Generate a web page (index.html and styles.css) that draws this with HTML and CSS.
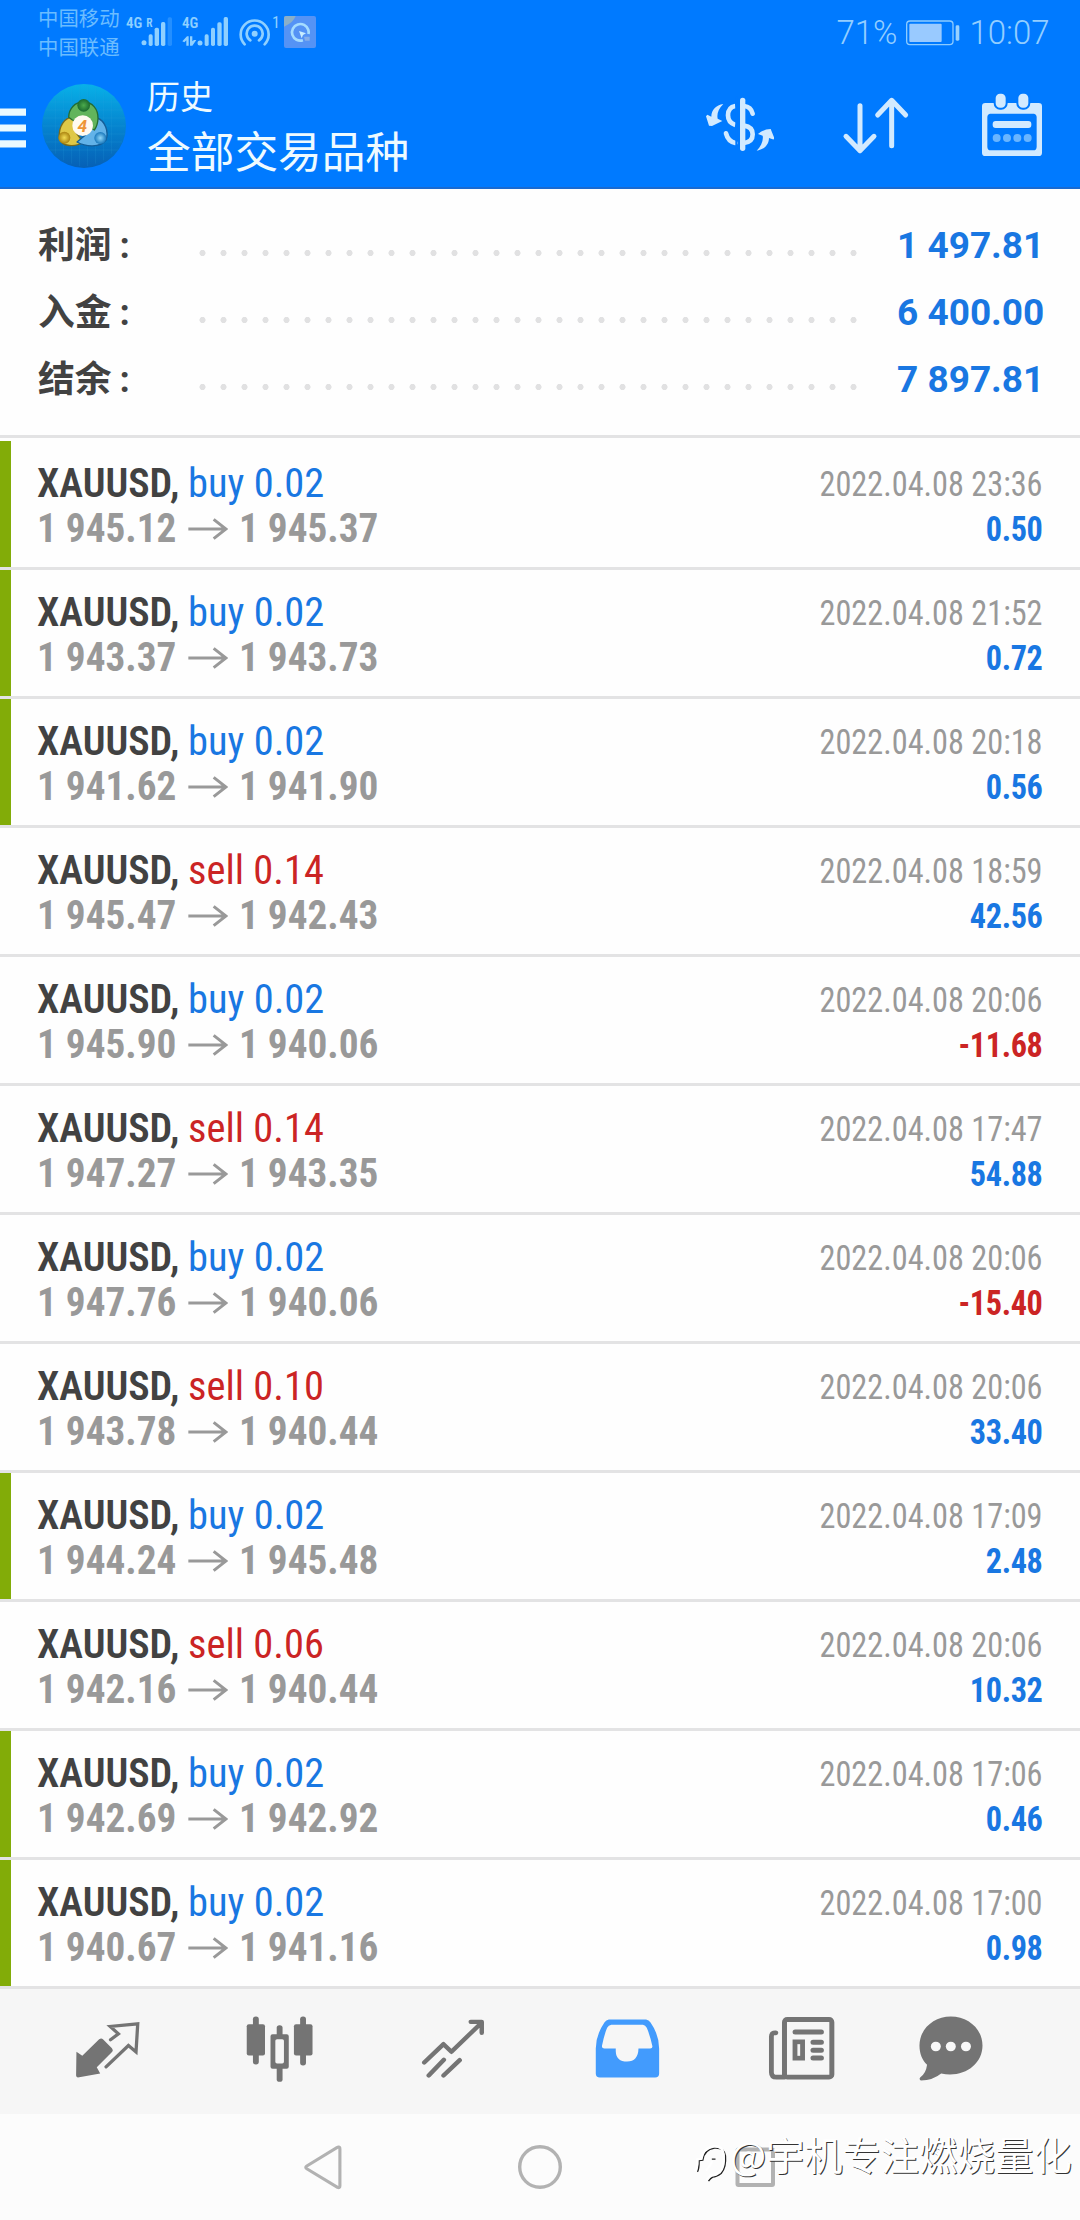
FILE: index.html
```html
<!DOCTYPE html>
<html lang="zh-CN">
<head>
<meta charset="utf-8">
<title>历史</title>
<link rel="stylesheet" href="styles.css">
</head>
<body>
<svg class="defs" width="0" height="0">
  <symbol id="arrow" viewBox="0 0 120 66"><path d="M1 33H112M77 4L114 33L77 62" fill="none" stroke="currentColor" stroke-width="9"/></symbol>
</svg>
<header class="top">
  <div class="status">
    <div class="carriers"><span>中国移动</span><span>中国联通</span></div>
    <svg class="signals" viewBox="0 0 600 135">
      <g fill="#8fd0ff">
        <text x="18" y="54" font-size="46" font-weight="600" textLength="49" lengthAdjust="spacingAndGlyphs">4G</text>
        <text x="79" y="51" font-size="39" font-weight="600" textLength="19" lengthAdjust="spacingAndGlyphs">R</text>
        <text x="186" y="54" font-size="46" font-weight="600" textLength="49" lengthAdjust="spacingAndGlyphs">4G</text>
        <circle cx="72" cy="98" r="7.5"/>
        <rect x="86" y="73" width="12" height="35" rx="5"/><rect x="104" y="53" width="13" height="55" rx="5"/><rect x="123" y="36" width="13" height="72" rx="5"/>
        <rect x="143" y="22" width="13" height="86" rx="5" opacity=".25"/>
        <circle cx="240" cy="99" r="7.5"/>
        <rect x="254" y="73" width="12" height="35" rx="5"/><rect x="273" y="53" width="12" height="55" rx="5"/><rect x="292" y="37" width="13" height="71" rx="5"/><rect x="311" y="21" width="13" height="87" rx="5"/>
        <path d="M187 94L201 79H206V107H199V91L193 97ZM210 79H217V94L222 90H229L217 107H210Z"/>
        <circle cx="404" cy="71" r="9"/>
        <text x="456" y="55" font-size="49" textLength="24" lengthAdjust="spacingAndGlyphs">1</text>
      </g>
      <g fill="none" stroke="#8fd0ff" stroke-width="8" stroke-linecap="round"><path d="M391 91A24 24 0 1 1 417 91"/><path d="M374 103A42 42 0 1 1 434 103"/></g>
      <rect x="492" y="18" width="96" height="96" rx="6" fill="#5593f5"/><path d="M492 50V24Q492 18 498 18H527Q520 38 492 50Z" fill="#8aafc9"/>
      <circle cx="541" cy="67" r="25" fill="none" stroke="#a5dcff" stroke-width="8" stroke-dasharray="130 28" transform="rotate(72 541 67)"/><path d="M537 63L558 70L549 75L545 85Z" fill="#c9edff"/><path d="M552 80H569V92H555Z" fill="#86aee8"/>
    </svg>
    <span class="pct">71%</span>
    <svg class="battery" viewBox="0 0 162 78"><rect x="2" y="3" width="139" height="71" rx="10" fill="none" stroke="#8ccbff" stroke-width="4"/><rect x="10" y="11" width="97" height="55" rx="3" fill="#99caff"/><rect x="149" y="16" width="11" height="46" rx="4" fill="#99d1ff"/></svg>
    <span class="clock">10:07</span>
  </div>
  <div class="appbar">
    <svg class="menu" viewBox="0 0 26 40"><path d="M0 4.2H26M0 20H26M0 35.8H26" stroke="#eafaff" stroke-width="7.2"/></svg>
    <svg class="logo" viewBox="21 16 252 252">
      <defs>
        <linearGradient id="sky" x1="0" y1="0" x2="0" y2="1"><stop offset="0" stop-color="#08b1e8"/><stop offset=".5" stop-color="#0584cf"/><stop offset="1" stop-color="#0660b6"/></linearGradient>
        <radialGradient id="gr"><stop offset="0" stop-color="#4cab4c"/><stop offset="1" stop-color="#1c6a2e"/></radialGradient>
        <radialGradient id="ye"><stop offset="0" stop-color="#f2dc53"/><stop offset="1" stop-color="#a9820f"/></radialGradient>
        <radialGradient id="bl"><stop offset="0" stop-color="#91d8fa"/><stop offset="1" stop-color="#1978bd"/></radialGradient>
      </defs>
      <circle cx="147" cy="142" r="126" fill="url(#sky)"/>
      <path d="M62 60V225M86 40V245M110 30V255M134 20V262M158 20V262M182 28V255M206 40V245M230 60V225M45 70H250M32 94H262M25 118H270M24 142H270M24 166H270M32 190H262M45 214H250" stroke="#2aa4df" stroke-opacity=".28" stroke-width="2"/>
      <g stroke-linejoin="round" stroke-width="4">
        <path d="M115 116C88 114 70 145 73 178C80 206 122 206 144 190L122 160Z" fill="#dfc846" stroke="#75691f"/>
        <path d="M186 118C211 126 222 160 213 184C195 207 155 206 126 190L165 158Z" fill="#62b2e8" stroke="#145e98"/>
        <path d="M101 116C101 90 120 70 145 70C173 70 190 92 189 120C188 136 184 146 178 154L112 124Z" fill="#62b45c" stroke="#236c35"/>
      </g>
      <circle cx="146" cy="80" r="19" fill="url(#gr)"/><circle cx="88" cy="177" r="18" fill="url(#ye)"/><circle cx="196" cy="178" r="18" fill="url(#bl)"/>
      <circle cx="143" cy="141" r="31" fill="#fffaf0"/><text x="142" y="160" text-anchor="middle" font-size="52" font-weight="700" font-style="italic" fill="#ee9536">4</text>
    </svg>
    <div class="titles"><span class="title">历史</span><span class="subtitle">全部交易品种</span></div>
    <div class="actions">
      <svg viewBox="180 258 240 240"><g fill="none" stroke="#d2eaff" stroke-width="14"><path d="M286 318Q264 322 264 346Q264 368 286 375"/><path d="M258 400Q264 424 286 429" stroke-linecap="round"/><path d="M312 318Q333 320 338 341" stroke-linecap="round"/><path d="M312 377Q338 381 338 403Q338 426 312 429"/></g><rect x="300" y="293" width="16" height="160" rx="8" fill="#d2eaff"/><rect x="286" y="290" width="6" height="160" fill="#007aff"/><path d="M250 312C235 326 230 342 233 356L247 363L216 378L207 377L198 349L202 344L214 350C214 330 228 315 250 312ZM350 452C363 439 371 422 368 407L354 402Q371 387 392 387L402 412Q403 420 398 418L387 414C387 435 371 449 350 452Z" fill="#d2eaff"/></svg>
      <svg viewBox="589 258 240 240"><path d="M661 317V449M619 409L661 452L703 409M756 437V303M714 345L756 301L798 345" fill="none" stroke="#d2eaff" stroke-width="15" stroke-linecap="round" stroke-linejoin="round"/></svg>
      <svg viewBox="996 258 240 240"><path fill="#d2eaff" fill-rule="evenodd" d="M1036 309H1196Q1206 309 1206 319V458Q1206 468 1196 468H1036Q1026 468 1026 458V319Q1026 309 1036 309ZM1050 341Q1042 343 1042 352V440Q1042 451 1052 451H1180Q1190 451 1190 440V352Q1190 343 1182 341Z"/><rect x="1064" y="278" width="36" height="48" rx="16" fill="#d2eaff" stroke="#007aff" stroke-width="6"/><rect x="1132" y="278" width="36" height="48" rx="16" fill="#d2eaff" stroke="#007aff" stroke-width="6"/><rect x="1058" y="363" width="116" height="21" rx="9" fill="#d2eaff"/><g fill="#69b5ff"><circle cx="1070" cy="414" r="12"/><circle cx="1101" cy="414" r="12"/><circle cx="1132" cy="414" r="12"/><circle cx="1163" cy="414" r="12"/></g></svg>
    </div>
  </div>
</header>
<main>
  <section class="summary">
    <div class="sum"><span class="label">利润<i>:</i></span><span class="dots"></span><b>1 497.81</b></div>
    <div class="sum"><span class="label">入金<i>:</i></span><span class="dots"></span><b>6 400.00</b></div>
    <div class="sum"><span class="label">结余<i>:</i></span><span class="dots"></span><b>7 897.81</b></div>
  </section>
  <section class="deals">
    <div class="deal tp"><div class="info"><div class="sym"><b>XAUUSD,</b><span class="buy">buy 0.02</span></div><div class="price"><span>1 945.12</span><svg><use href="#arrow"/></svg><span>1 945.37</span></div></div><div class="res"><time>2022.04.08 23:36</time><b class="buy">0.50</b></div></div>
    <div class="deal tp"><div class="info"><div class="sym"><b>XAUUSD,</b><span class="buy">buy 0.02</span></div><div class="price"><span>1 943.37</span><svg><use href="#arrow"/></svg><span>1 943.73</span></div></div><div class="res"><time>2022.04.08 21:52</time><b class="buy">0.72</b></div></div>
    <div class="deal tp"><div class="info"><div class="sym"><b>XAUUSD,</b><span class="buy">buy 0.02</span></div><div class="price"><span>1 941.62</span><svg><use href="#arrow"/></svg><span>1 941.90</span></div></div><div class="res"><time>2022.04.08 20:18</time><b class="buy">0.56</b></div></div>
    <div class="deal"><div class="info"><div class="sym"><b>XAUUSD,</b><span class="sell">sell 0.14</span></div><div class="price"><span>1 945.47</span><svg><use href="#arrow"/></svg><span>1 942.43</span></div></div><div class="res"><time>2022.04.08 18:59</time><b class="buy">42.56</b></div></div>
    <div class="deal"><div class="info"><div class="sym"><b>XAUUSD,</b><span class="buy">buy 0.02</span></div><div class="price"><span>1 945.90</span><svg><use href="#arrow"/></svg><span>1 940.06</span></div></div><div class="res"><time>2022.04.08 20:06</time><b class="sell">-11.68</b></div></div>
    <div class="deal"><div class="info"><div class="sym"><b>XAUUSD,</b><span class="sell">sell 0.14</span></div><div class="price"><span>1 947.27</span><svg><use href="#arrow"/></svg><span>1 943.35</span></div></div><div class="res"><time>2022.04.08 17:47</time><b class="buy">54.88</b></div></div>
    <div class="deal"><div class="info"><div class="sym"><b>XAUUSD,</b><span class="buy">buy 0.02</span></div><div class="price"><span>1 947.76</span><svg><use href="#arrow"/></svg><span>1 940.06</span></div></div><div class="res"><time>2022.04.08 20:06</time><b class="sell">-15.40</b></div></div>
    <div class="deal"><div class="info"><div class="sym"><b>XAUUSD,</b><span class="sell">sell 0.10</span></div><div class="price"><span>1 943.78</span><svg><use href="#arrow"/></svg><span>1 940.44</span></div></div><div class="res"><time>2022.04.08 20:06</time><b class="buy">33.40</b></div></div>
    <div class="deal tp"><div class="info"><div class="sym"><b>XAUUSD,</b><span class="buy">buy 0.02</span></div><div class="price"><span>1 944.24</span><svg><use href="#arrow"/></svg><span>1 945.48</span></div></div><div class="res"><time>2022.04.08 17:09</time><b class="buy">2.48</b></div></div>
    <div class="deal"><div class="info"><div class="sym"><b>XAUUSD,</b><span class="sell">sell 0.06</span></div><div class="price"><span>1 942.16</span><svg><use href="#arrow"/></svg><span>1 940.44</span></div></div><div class="res"><time>2022.04.08 20:06</time><b class="buy">10.32</b></div></div>
    <div class="deal tp"><div class="info"><div class="sym"><b>XAUUSD,</b><span class="buy">buy 0.02</span></div><div class="price"><span>1 942.69</span><svg><use href="#arrow"/></svg><span>1 942.92</span></div></div><div class="res"><time>2022.04.08 17:06</time><b class="buy">0.46</b></div></div>
    <div class="deal tp"><div class="info"><div class="sym"><b>XAUUSD,</b><span class="buy">buy 0.02</span></div><div class="price"><span>1 940.67</span><svg><use href="#arrow"/></svg><span>1 941.16</span></div></div><div class="res"><time>2022.04.08 17:00</time><b class="buy">0.98</b></div></div>
  </section>
</main>
<nav class="tabs">
  <svg preserveAspectRatio="none" viewBox="194.6 124.5 232.3 240"><path d="M222 244L239 256L288 206Q294 202 299 206L325 233Q330 239 326 244L281 290L291 309L226 321Q221 320 221 315Z" fill="#747474"/><path d="M321 208L344 190L320 168L400 160L395 244L373 225L308 289" fill="none" stroke="#747474" stroke-width="9.5" stroke-linecap="round"/></svg>
  <svg preserveAspectRatio="none" viewBox="698.4 124.5 232.3 240" fill="#747474"><rect x="736" y="138" width="17" height="144" rx="8"/><rect x="718" y="161" width="53" height="94" rx="6"/><rect x="873" y="138" width="17" height="147" rx="8"/><rect x="855" y="161" width="54" height="94" rx="6"/><rect x="805" y="164" width="17" height="40" rx="8"/><rect x="805" y="285" width="17" height="49" rx="8"/><path fill-rule="evenodd" d="M793 191H834Q840 191 840 197V289Q840 295 834 295H793Q787 295 787 289V197Q787 191 793 191ZM806 206Q801 206 801 211V274Q801 279 806 279H821Q826 279 826 274V211Q826 206 821 206Z"/></svg>
  <svg preserveAspectRatio="none" viewBox="1202.3 124.5 232.3 240" fill="none" stroke="#747474" stroke-width="13" stroke-linecap="round" stroke-linejoin="round"><path d="M1232 276L1288 221L1311 244L1397 158M1367 154H1399V187M1245 315L1289 268M1288 315L1335 269"/></svg>
  <svg preserveAspectRatio="none" viewBox="136.5 124.5 232.3 240"><path fill="#429bfd" fill-rule="evenodd" d="M200 147H308Q316 148 321 156Q346 193 346 234V309Q346 321 334 321H174Q162 321 162 309V234Q162 194 187 156Q192 148 200 147ZM207 163Q199 164 195 172Q186 194 180 226Q179 234 187 234H220V242Q221 273 253 273Q285 273 286 234H320Q328 234 326 226Q320 196 310 172Q306 164 299 163Z"/></svg>
  <svg preserveAspectRatio="none" viewBox="641.8 124.5 232.3 240" fill="none" stroke="#747474" stroke-linecap="round"><rect x="710" y="147" width="137.500" height="173" rx="8" stroke-width="14.500"/><path d="M685 187Q672 186 672 198V305Q672 320 687 320H710" stroke-width="14"/><path d="M741 184.500H817M793 215.500H817M793 239H817M793 262.500H817" stroke-width="15"/><rect x="740.500" y="214" width="22" height="49" stroke-width="14"/></svg>
  <svg preserveAspectRatio="none" viewBox="1077.4 124.5 232.3 240"><path fill="#747474" d="M1193 138C1244 138 1285 176 1285 225C1285 284 1228 323 1165 309Q1142 329 1106 330Q1100 326 1104 321Q1121 309 1124 283C1110 269 1102 249 1102 225C1102 176 1143 138 1193 138Z"/><g fill="#f8f8f8"><circle cx="1149.500" cy="228" r="14.500"/><circle cx="1193" cy="228" r="14.500"/><circle cx="1237" cy="228" r="14.500"/></g></svg>
</nav>
<footer class="sysnav">
  <svg class="back" preserveAspectRatio="none" viewBox="882 517 116 150"><path d="M985 532Q989 531 989 538V649Q989 656 982 653L893 597Q887 593 893 589L980 534Z" fill="none" stroke="#b2b2b2" stroke-width="9"/></svg>
  <svg class="home" viewBox="0 0 50 50"><circle cx="25" cy="25" r="20.300" fill="none" stroke="#b2b2b2" stroke-width="3.400"/></svg>
  <svg class="recent" viewBox="0 0 50 50"><rect x="7.500" y="7.500" width="35.500" height="35.500" rx="1" fill="none" stroke="#b2b2b2" stroke-width="4"/></svg>
  <div class="mark"><svg viewBox="0 0 120 150"><g transform="translate(2.500 2.500)" stroke="#222"><path d="M20 108Q25 100 25 74L36 73Q40 42 71 37Q101 35 104 60Q107 95 91 113Q76 124 66 124Q59 127 53 136M63 70H74" fill="none" stroke-width="4"/></g><path d="M14 108Q23 100 22 73L34 71Q38 39 69 34Q98 31 101 58Q104 93 89 110Q74 122 62 121L49 135M48 106Q62 92 67 78" fill="none" stroke="#fff" stroke-width="7"/></svg><span>@宇机专注燃烧量化</span></div>
</footer>
</body>
</html>
```
FILE: styles.css
```css
* { box-sizing: border-box; }
body {
  margin: 0;
  width: 1080px;
  height: 2220px;
  background: #fefefe;
  font-family: Roboto, "Noto Sans CJK SC", sans-serif;
  overflow: hidden;
}
svg { display: block; flex: none; }
.defs { position: absolute; }
b { font-weight: 700; }

.top { height: 189px; background: #007aff; border-bottom: 2px solid #1a6ad0; }
.status { display: flex; height: 64px; color: #8ccbff; }
.carriers { display: flex; flex-direction: column; width: 82px; margin: 3px 0 0 38px; font: 400 20.4px/28.5px "Noto Sans CJK SC", sans-serif; color: #6bbcff; white-space: nowrap; }
.signals { width: 200px; height: 45px; margin-top: 10px; font-family: "Roboto Condensed", Roboto, sans-serif; }
.pct, .clock { font-size: 33px; line-height: 64px; font-weight: 300; padding-top: 1px; white-space: nowrap; color: #93ceff; }
.pct { margin-left: auto; }
.battery { width: 54px; height: 26px; margin: 20px 10px 0 8px; }
.clock { width: 110.5px; }

.appbar { display: flex; align-items: center; height: 123px; }
.menu { width: 26px; height: 40px; margin-top: 4px; }
.logo { width: 84px; height: 84px; margin-left: 16px; }
.titles { display: flex; flex-direction: column; margin: 0 0 3px 21px; font-family: "Noto Sans CJK SC", sans-serif; color: #eefaff; }
.title { font-size: 33px; line-height: 50px; }
.subtitle { font-size: 43.7px; line-height: 58px; }
.actions { display: flex; gap: 56px; margin: 0 28px 0 auto; }
.actions svg { width: 80px; height: 80px; }

.summary { height: 249px; padding: 23px 37px 0 38px; border-bottom: 3px solid #e3e3e4; }
.sum { display: flex; align-items: center; justify-content: space-between; height: 67px; }
.label { width: 154px; margin-bottom: 3px; font: 700 36.8px/50px "Noto Sans CJK SC", sans-serif; color: #424242; }
.label i { font-style: normal; font-family: Roboto, sans-serif; margin-left: 8px; }
.dots { width: 672px; height: 6px; margin-top: 15px; background: radial-gradient(circle, #e1e1e2 2.7px, transparent 3.4px) 0 0 / 21px 6px repeat-x; }
.sum b { width: 179px; padding-left: 33px; font-size: 37px; color: #1977e2; white-space: nowrap; }

.deals { padding-top: 3px; font-family: "Roboto Condensed", Roboto, sans-serif; }
.deal { display: flex; justify-content: space-between; height: 129px; padding: 19px 37px 0; border-bottom: 3px solid #e3e3e4; line-height: 45px; }
.tp { background: linear-gradient(#82ac08, #82ac08) 0 0 / 11px 126px no-repeat; }
.sym, .price { display: flex; font-size: 41.5px; white-space: nowrap; }
.sym b { width: 151px; color: #424242; font-weight: 600; transform: scaleX(.964); transform-origin: left; }
.sym span { transform: scaleX(.975); transform-origin: left; }
.price { align-items: center; font-weight: 700; color: #999; }
.price span { width: 149px; transform: scaleX(.945); transform-origin: left; }
.price svg { width: 40px; height: 22px; margin: 2px 11px 0 2px; }
.res { display: flex; flex-direction: column; align-items: flex-end; padding-top: 2px; font-size: 34.5px; transform: scaleX(.935); transform-origin: right; }
.res b { letter-spacing: -.4px; }
time { color: #999; }
.buy { color: #1977e2; }
.sell { color: #cb2424; }

.tabs { display: flex; align-items: center; height: 125px; padding-left: 67px; gap: 93.4px; background: #f6f6f6; }
.tabs svg { width: 80px; height: 80px; }
.tabs svg:last-child { margin-left: -23.4px; }
.sysnav { position: relative; display: flex; align-items: flex-start; height: 106px; padding: 28px 0 0 303px; background: #fcfcfc; }
.back { width: 40px; height: 50px; }
.home { width: 50px; height: 50px; margin-left: 172px; }
.recent { width: 50px; height: 50px; margin-left: 165px; }
.mark { position: absolute; left: 690px; top: 21px; display: flex; }
.mark svg { width: 40px; height: 50px; }
.mark span { margin-top: -8px; font: 400 38.2px/54px "Noto Sans CJK SC", sans-serif; color: #fff; text-shadow: 1px 1px 0 #333; white-space: nowrap; }
```
